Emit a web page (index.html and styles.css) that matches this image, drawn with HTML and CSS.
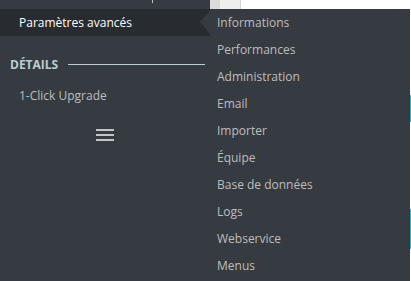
FILE: index.html
```html
<!DOCTYPE html>
<html lang="fr">
<head>
  <meta charset="UTF-8">
  <meta name="viewport" content="width=device-width, initial-scale=1.0">
  <title>Paramètres avancés</title>
  <link rel="stylesheet" href="styles.css">
</head>
<body>

  <nav class="sidebar">
    <div class="sidebar-top"><span class="tick"></span></div>
    <a class="menu-link active" href="#">Paramètres avancés</a>

    <div class="section-title">
      <span>Détails</span>
      <span class="rule"></span>
    </div>
    <a class="menu-link" href="#">1-Click Upgrade</a>

    <div class="collapse">
      <span></span><span></span><span></span>
    </div>
  </nav>

  <div class="content">
    <div class="content-top">
      <span class="col-a"></span>
      <span class="col-b"></span>
    </div>
    <div class="content-body">
      <ul class="submenu">
        <li><a href="#">Informations</a></li>
        <li><a href="#">Performances</a></li>
        <li><a href="#">Administration</a></li>
        <li><a href="#">Email</a></li>
        <li><a href="#">Importer</a></li>
        <li><a href="#">Équipe</a></li>
        <li><a href="#">Base de données</a></li>
        <li><a href="#">Logs</a></li>
        <li><a href="#">Webservice</a></li>
        <li><a href="#">Menus</a></li>
      </ul>
      <div class="edge">
        <span class="blue one"></span>
        <span class="blue two"></span>
      </div>
    </div>
  </div>

</body>
</html>
```

FILE: styles.css
```css
* {
  box-sizing: border-box;
}

body {
  font-family: 'Open Sans', 'Noto Sans', sans-serif;
  background: #363a41;
  margin: 0;
  padding: 0;
  display: flex;
  height: 281px;
  overflow: hidden;
}

a {
  text-decoration: none;
}

.sidebar {
  width: 210px;
  flex-shrink: 0;
  display: flex;
  flex-direction: column;
}

.sidebar-top {
  height: 9px;
  position: relative;
}

.tick {
  position: absolute;
  left: 152px;
  top: 0;
  width: 1px;
  height: 3px;
  background: #bebebe;
}

.menu-link {
  display: block;
  height: 27px;
  line-height: 28px;
  padding-left: 19px;
  font-size: 12px;
  color: #bebebe;
}

.menu-link.active {
  background: #282b30;
  color: #fff;
  position: relative;
}

.menu-link.active::after {
  content: "";
  position: absolute;
  right: 0;
  top: 1px;
  border-top: 12.5px solid transparent;
  border-bottom: 12.5px solid transparent;
  border-right: 10px solid #363a41;
}

.section-title {
  display: flex;
  align-items: center;
  gap: 10px;
  margin: 20px 5px 0 10px;
  height: 16px;
  font-size: 12px;
  font-weight: 700;
  text-transform: uppercase;
  color: #bbcdd2;
}

.section-title .rule {
  flex: 1;
  height: 1px;
  background: #bbcdd2;
}

.section-title + .menu-link {
  margin-top: 10px;
}

.collapse {
  display: flex;
  flex-direction: column;
  gap: 3px;
  width: 18px;
  margin: 20px 0 0 96px;
}

.collapse span {
  height: 2px;
  background: #c4c4c4;
}

.content {
  flex: 1;
  display: flex;
  flex-direction: column;
}

.content-top {
  height: 9px;
  display: flex;
  background: #fff;
}

.col-a {
  width: 10px;
  background: #dcdcdc;
}

.col-b {
  width: 21px;
  background: #eeeeee;
  border-right: 1px solid #d4d4d4;
}

.content-body {
  flex: 1;
  display: flex;
}

.submenu {
  list-style: none;
  margin: 0;
  padding: 0;
  width: 200px;
  background: #363a41;
}

.submenu li a {
  display: block;
  height: 27px;
  line-height: 28px;
  padding-left: 7px;
  font-size: 12px;
  color: #bebebe;
}

.edge {
  flex: 1;
  background: #fff;
  position: relative;
}

.blue {
  position: absolute;
  left: 0;
  right: 0;
  background: #25b9d7;
}

.blue.one {
  top: 86px;
  height: 27px;
}

.blue.two {
  top: 200px;
  height: 40px;
}
```
